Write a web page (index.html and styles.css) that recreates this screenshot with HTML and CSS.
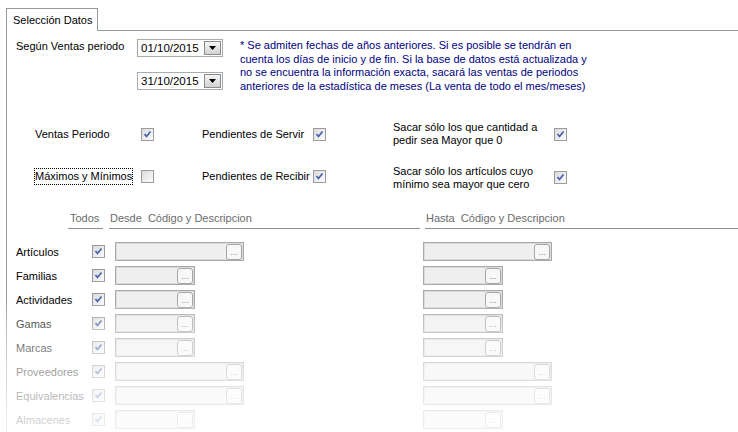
FILE: index.html
```html
<!DOCTYPE html>
<html lang="es">
<head>
    <meta charset="UTF-8">
    <meta name="viewport" content="width=device-width, initial-scale=1.0">
    <title>Selección Datos</title>
    <link rel="stylesheet" href="styles.css">
</head>
<body>
    <!-- Tab header -->
    <div class="tabs">
        <div class="tab">Selección Datos</div>
        <div class="tab-rest"></div>
    </div>

    <div class="panel">
        <!-- Period selection -->
        <div class="period">
            <div class="period-label">Según Ventas periodo</div>
            <div class="dates">
                <div class="combo">
                    <span class="combo-value">01/10/2015</span>
                    <span class="combo-btn"><svg width="7" height="4" viewBox="0 0 7 4"><polygon points="0,0 7,0 3.5,4" fill="#000"/></svg></span>
                </div>
                <div class="combo">
                    <span class="combo-value">31/10/2015</span>
                    <span class="combo-btn"><svg width="7" height="4" viewBox="0 0 7 4"><polygon points="0,0 7,0 3.5,4" fill="#000"/></svg></span>
                </div>
            </div>
            <p class="note">* Se admiten fechas de años anteriores. Si es posible se tendrán en<br>
                cuenta los días de inicio y de fin. Si la base de datos está actualizada y<br>
                no se encuentra la información exacta, sacará las ventas de periodos<br>
                anteriores de la estadística de meses (La venta de todo el mes/meses)</p>
        </div>

        <!-- Options -->
        <div class="options">
            <div class="opt-label">Ventas Periodo</div>
            <span class="cb"><svg width="11" height="11" viewBox="0 0 11 11"><path d="M2.5 5 L4.5 7.5 L8.5 2.5" fill="none" stroke="#4560b0" stroke-width="1.7"/></svg></span>
            <div class="opt-label">Pendientes de Servir</div>
            <span class="cb"><svg width="11" height="11" viewBox="0 0 11 11"><path d="M2.5 5 L4.5 7.5 L8.5 2.5" fill="none" stroke="#4560b0" stroke-width="1.7"/></svg></span>
            <div class="opt-label two-lines">Sacar sólo los que cantidad a<br>pedir sea Mayor que 0</div>
            <span class="cb"><svg width="11" height="11" viewBox="0 0 11 11"><path d="M2.5 5 L4.5 7.5 L8.5 2.5" fill="none" stroke="#4560b0" stroke-width="1.7"/></svg></span>

            <div class="opt-label"><span class="focused">Máximos y Mínimos</span></div>
            <span class="cb"></span>
            <div class="opt-label">Pendientes de Recibir</div>
            <span class="cb"><svg width="11" height="11" viewBox="0 0 11 11"><path d="M2.5 5 L4.5 7.5 L8.5 2.5" fill="none" stroke="#4560b0" stroke-width="1.7"/></svg></span>
            <div class="opt-label two-lines lower">Sacar sólo los artículos cuyo<br>mínimo sea mayor que cero</div>
            <span class="cb lower"><svg width="11" height="11" viewBox="0 0 11 11"><path d="M2.5 5 L4.5 7.5 L8.5 2.5" fill="none" stroke="#4560b0" stroke-width="1.7"/></svg></span>
        </div>

        <!-- Lookup header -->
        <div class="lookup-head">
            <div class="head-todos">Todos</div>
            <div class="head-desde">Desde&nbsp; Código y Descripcion</div>
            <div class="head-hasta">Hasta&nbsp; Código y Descripcion</div>
        </div>

        <!-- Lookup rows -->
        <div class="lookup">
            <div class="lookup-row">
                <span>Artículos</span>
                <span class="cb"><svg width="11" height="11" viewBox="0 0 11 11"><path d="M2.5 5 L4.5 7.5 L8.5 2.5" fill="none" stroke="#4560b0" stroke-width="1.7"/></svg></span>
                <div class="lookup-box long"><span class="dots">...</span></div>
                <div class="lookup-box long"><span class="dots">...</span></div>
            </div>
            <div class="lookup-row">
                <span>Familias</span>
                <span class="cb"><svg width="11" height="11" viewBox="0 0 11 11"><path d="M2.5 5 L4.5 7.5 L8.5 2.5" fill="none" stroke="#4560b0" stroke-width="1.7"/></svg></span>
                <div class="lookup-box short"><span class="dots">...</span></div>
                <div class="lookup-box short"><span class="dots">...</span></div>
            </div>
            <div class="lookup-row">
                <span>Actividades</span>
                <span class="cb"><svg width="11" height="11" viewBox="0 0 11 11"><path d="M2.5 5 L4.5 7.5 L8.5 2.5" fill="none" stroke="#4560b0" stroke-width="1.7"/></svg></span>
                <div class="lookup-box short"><span class="dots">...</span></div>
                <div class="lookup-box short"><span class="dots">...</span></div>
            </div>
            <div class="lookup-row">
                <span>Gamas</span>
                <span class="cb"><svg width="11" height="11" viewBox="0 0 11 11"><path d="M2.5 5 L4.5 7.5 L8.5 2.5" fill="none" stroke="#4560b0" stroke-width="1.7"/></svg></span>
                <div class="lookup-box short"><span class="dots">...</span></div>
                <div class="lookup-box short"><span class="dots">...</span></div>
            </div>
            <div class="lookup-row">
                <span>Marcas</span>
                <span class="cb"><svg width="11" height="11" viewBox="0 0 11 11"><path d="M2.5 5 L4.5 7.5 L8.5 2.5" fill="none" stroke="#4560b0" stroke-width="1.7"/></svg></span>
                <div class="lookup-box short"><span class="dots">...</span></div>
                <div class="lookup-box short"><span class="dots">...</span></div>
            </div>
            <div class="lookup-row">
                <span>Proveedores</span>
                <span class="cb"><svg width="11" height="11" viewBox="0 0 11 11"><path d="M2.5 5 L4.5 7.5 L8.5 2.5" fill="none" stroke="#4560b0" stroke-width="1.7"/></svg></span>
                <div class="lookup-box long"><span class="dots">...</span></div>
                <div class="lookup-box long"><span class="dots">...</span></div>
            </div>
            <div class="lookup-row">
                <span>Equivalencias</span>
                <span class="cb"><svg width="11" height="11" viewBox="0 0 11 11"><path d="M2.5 5 L4.5 7.5 L8.5 2.5" fill="none" stroke="#4560b0" stroke-width="1.7"/></svg></span>
                <div class="lookup-box long"><span class="dots">...</span></div>
                <div class="lookup-box long"><span class="dots">...</span></div>
            </div>
            <div class="lookup-row">
                <span>Almacenes</span>
                <span class="cb"><svg width="11" height="11" viewBox="0 0 11 11"><path d="M2.5 5 L4.5 7.5 L8.5 2.5" fill="none" stroke="#4560b0" stroke-width="1.7"/></svg></span>
                <div class="lookup-box short"><span class="dots">...</span></div>
                <div class="lookup-box short"><span class="dots">...</span></div>
            </div>
        </div>
    </div>

    <!-- White fade over the lower rows -->
    <div class="fade"></div>
</body>
</html>
```

FILE: styles.css
```css
body {
    margin: 0;
    height: 432px;
    overflow: hidden;
    position: relative;
    background: #fff;
    color: #000;
    font-family: "Liberation Sans", Arial, sans-serif;
    font-size: 11px;
}

/* Tabs */
.tabs {
    display: flex;
    padding: 8px 0 0 6px;
}

.tab {
    width: 92px;
    height: 23px;
    box-sizing: border-box;
    border: 1px solid #919b9c;
    border-bottom: none;
    padding-left: 6px;
    line-height: 22px;
}

.tab-rest {
    flex: 1;
    height: 23px;
    box-sizing: border-box;
    border-bottom: 1px solid #919b9c;
}

.panel {
    margin-left: 6px;
    border-left: 1px solid #919b9c;
    height: 401px;
}

/* Period */
.period {
    display: flex;
    padding: 8px 0 0 9px;
}

.period-label {
    width: 121px;
    line-height: 13px;
    padding-top: 1px;
}

.dates {
    width: 103px;
    display: flex;
    flex-direction: column;
    gap: 15px;
}

.combo {
    width: 86px;
    height: 18px;
    box-sizing: border-box;
    border: 1px solid #a5acb2;
    display: flex;
    align-items: center;
    justify-content: space-between;
    padding: 0 1px 0 3px;
}

.combo-value {
    font-size: 11.5px;
}

.combo-btn {
    width: 17px;
    height: 14px;
    box-sizing: border-box;
    border: 1px solid #8c8c8c;
    background: linear-gradient(#f6f6f6, #d2d2d2);
    display: flex;
    align-items: center;
    justify-content: center;
}

.note {
    margin: 0;
    color: #000080;
    line-height: 13.5px;
    white-space: nowrap;
}

/* Options */
.options {
    display: grid;
    grid-template-columns: 106px 61px 111px 80px 161px 13px;
    grid-template-rows: 26px 26px;
    row-gap: 16px;
    align-items: center;
    margin-top: 28px;
    padding-left: 28px;
}

.opt-label {
    line-height: 13px;
}

.focused {
    display: inline-block;
    outline: 1px dotted #000;
    line-height: 13px;
    padding: 1px 0;
}

.lower {
    margin-top: 3px;
}

/* Checkbox */
.cb {
    display: inline-block;
    width: 13px;
    height: 13px;
    box-sizing: border-box;
    border: 1px solid #9c9c9c;
    background: linear-gradient(135deg, #dadada, #fdfdfd);
}

.cb svg {
    display: block;
}

/* Lookup */
.lookup-head {
    display: flex;
    margin-top: 23px;
    padding-left: 61px;
    color: #6b6b6b;
    line-height: 13px;
}

.head-todos,
.head-desde,
.head-hasta {
    box-sizing: border-box;
    border-bottom: 1px solid #8f8f8f;
    padding: 0 0 3px 1px;
}

.head-todos {
    width: 35px;
    padding-left: 2px;
}

.head-desde {
    width: 311px;
    margin-left: 6px;
}

.head-hasta {
    flex: 1;
    margin-left: 5px;
}

.lookup {
    margin-top: 13px;
    padding-left: 9px;
}

.lookup-row {
    display: grid;
    grid-template-columns: 76px 23px 308px auto;
    height: 19px;
    align-items: center;
    margin-bottom: 5px;
}

.lookup-box {
    height: 19px;
    box-sizing: border-box;
    border: 1px solid #a9a9a9;
    box-shadow: inset 0 0 0 1px #dadada;
    background: #efefef;
    display: flex;
    justify-content: flex-end;
    align-items: center;
    padding-right: 1px;
}

.lookup-box.long {
    width: 129px;
}

.lookup-box.short {
    width: 80px;
}

.dots {
    width: 16px;
    height: 16px;
    box-sizing: border-box;
    border: 1px solid #a6a6a6;
    border-radius: 3px;
    background: #f8f8f8;
    color: #8a8a8a;
    font-size: 9px;
    line-height: 9px;
    padding-top: 3px;
    text-align: center;
    overflow: hidden;
}

.fade {
    position: absolute;
    left: 0;
    right: 0;
    top: 300px;
    bottom: 0;
    pointer-events: none;
    background: linear-gradient(rgba(255, 255, 255, 0) 0px,
        rgba(255, 255, 255, 0.3) 22px,
        rgba(255, 255, 255, 0.45) 46px,
        rgba(255, 255, 255, 0.6) 71px,
        rgba(255, 255, 255, 0.7) 95px,
        rgba(255, 255, 255, 0.8) 119px,
        rgba(255, 255, 255, 0.82) 132px);
}
```
